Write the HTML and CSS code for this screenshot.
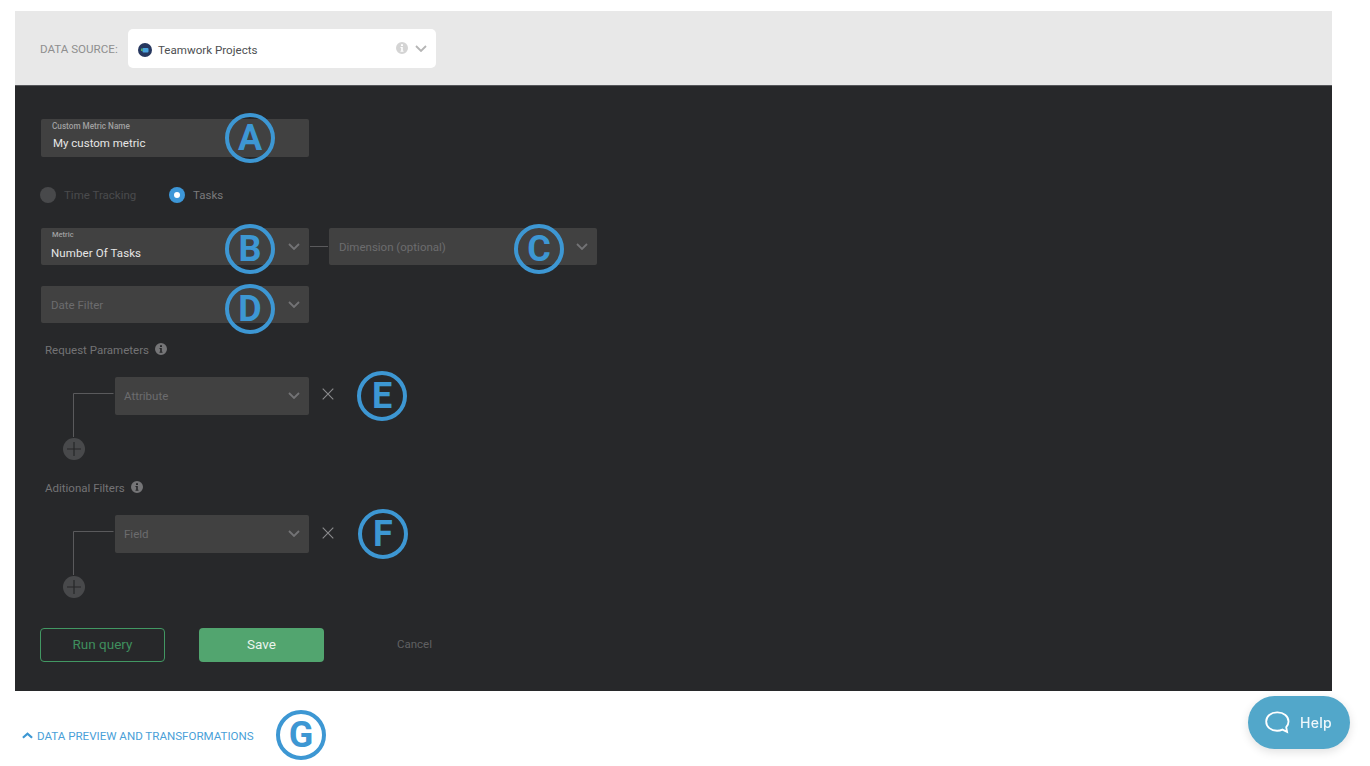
FILE: index.html
```html
<!DOCTYPE html>
<html lang="en">
<head>
<meta charset="utf-8">
<title>Custom Metric</title>
<link rel="stylesheet" href="styles.css">
</head>
<body>
<main class="page">
  <header class="source-bar">
    <span class="source-label">DATA SOURCE:</span>
    <div class="source-select">
      <svg class="source-logo" viewBox="0 0 14 14"><circle cx="7" cy="7" r="7" fill="#26375f"/><rect x="4.500" y="5" width="6" height="4.500" rx="1" fill="#4aa3df"/><rect x="3" y="5.500" width="1.800" height="2.500" fill="#4fae6f"/></svg>
      <span class="source-name">Teamwork Projects</span>
      <svg class="info info-light" viewBox="0 0 12 12"><use href="#i-info"/></svg>
      <svg class="chev chev-light" viewBox="0 0 12 7"><use href="#i-chev"/></svg>
    </div>
  </header>

  <section class="panel">
    <div class="field field-name">
      <label class="mini mini-name">Custom Metric Name</label>
      <span class="value value-name">My custom metric</span>
      <span class="badge badge-a">A</span>
    </div>

    <div class="radios">
      <span class="radio radio-off"></span><span class="radio-text radio-text-off">Time Tracking</span>
      <span class="radio radio-on"></span><span class="radio-text">Tasks</span>
    </div>

    <div class="metric-row">
      <div class="field field-select">
        <label class="mini mini-metric">Metric</label>
        <span class="value">Number Of Tasks</span>
        <span class="badge badge-b">B</span>
        <svg class="chev chev-dark" viewBox="0 0 12 7"><use href="#i-chev"/></svg>
      </div>
      <span class="connector"></span>
      <div class="field field-select field-plain">
        <span class="placeholder">Dimension (optional)</span>
        <span class="badge badge-c">C</span>
        <svg class="chev chev-dark" viewBox="0 0 12 7"><use href="#i-chev"/></svg>
      </div>
    </div>

    <div class="field field-select field-plain field-date">
      <span class="placeholder">Date Filter</span>
      <span class="badge badge-d">D</span>
      <svg class="chev chev-dark" viewBox="0 0 12 7"><use href="#i-chev"/></svg>
    </div>

    <div class="section-title title-params">Request Parameters <svg class="info info-dark" viewBox="0 0 12 12"><use href="#i-info"/></svg></div>
    <div class="tree">
      <svg class="tree-lines" viewBox="0 0 42 60"><path d="M40.500 16.500H.5V60" fill="none" stroke="#5a5a5c"/></svg>
      <div class="field field-attr field-plain">
        <span class="placeholder placeholder-attr">Attribute</span>
        <svg class="chev chev-dark" viewBox="0 0 12 7"><use href="#i-chev"/></svg>
      </div>
      <svg class="close" viewBox="0 0 12 12"><path d="M.7.7l10.600 10.600M11.300.7L.7 11.300" stroke="#8b8b8d" stroke-width="1.100" fill="none"/></svg>
      <span class="badge badge-e">E</span>
      <span class="add"><svg viewBox="0 0 14 14"><path d="M7 0v14M0 7h14" stroke="#262729" stroke-width="1.200"/></svg></span>
    </div>

    <div class="section-title title-filters">Aditional Filters <svg class="info info-dark" viewBox="0 0 12 12"><use href="#i-info"/></svg></div>
    <div class="tree">
      <svg class="tree-lines" viewBox="0 0 42 60"><path d="M40.500 16.500H.5V60" fill="none" stroke="#5a5a5c"/></svg>
      <div class="field field-attr field-plain">
        <span class="placeholder placeholder-attr">Field</span>
        <svg class="chev chev-dark" viewBox="0 0 12 7"><use href="#i-chev"/></svg>
      </div>
      <svg class="close close-low" viewBox="0 0 12 12"><path d="M.7.7l10.600 10.600M11.300.7L.7 11.300" stroke="#8b8b8d" stroke-width="1.100" fill="none"/></svg>
      <span class="badge badge-f">F</span>
      <span class="add"><svg viewBox="0 0 14 14"><path d="M7 0v14M0 7h14" stroke="#262729" stroke-width="1.200"/></svg></span>
    </div>

    <div class="actions">
      <button class="btn btn-outline">Run query</button>
      <button class="btn btn-solid">Save</button>
      <span class="cancel">Cancel</span>
    </div>
  </section>

  <footer class="preview">
    <svg class="preview-chev" viewBox="0 0 12 7"><path d="M1 6l5-4.500L11 6" fill="none" stroke="#3d97d3" stroke-width="2.400"/></svg>
    <span class="preview-text">DATA PREVIEW AND TRANSFORMATIONS</span>
    <span class="badge badge-g">G</span>
  </footer>
</main>

<button class="help">
  <svg class="help-icon" viewBox="0 0 26 24"><path d="M12.500 1.500C6 1.500 1.200 5.600 1.200 11s4.800 9.600 11.300 9.600c2 0 4-.4 5.600-1.200l4.900 2.300-.9-4.800c1.500-1.700 2.400-3.700 2.400-5.900 0-5.400-5-9.500-11.500-9.500z" fill="none" stroke="#fff" stroke-width="1.900"/></svg>
  <span>Help</span>
</button>

<svg class="defs" width="0" height="0">
  <defs>
    <symbol id="i-info" viewBox="0 0 12 12"><path fill-rule="evenodd" fill="currentColor" d="M6 0a6 6 0 1 1 0 12A6 6 0 0 1 6 0zM5 2.300v1.700h2V2.300zM4.500 5v1h.7v2.800h-.7v1h3v-1h-.7V5z"/></symbol>
    <symbol id="i-chev" viewBox="0 0 12 7"><path d="M1 1l5 5 5-5" fill="none" stroke="currentColor" stroke-width="1.800"/></symbol>
  </defs>
</svg>
</body>
</html>
```

FILE: styles.css
```css
* { box-sizing: border-box; }
html, body { margin: 0; padding: 0; height: 100%; overflow: hidden; }
body {
  background: #fff;
  font-family: Roboto, "Liberation Sans", sans-serif;
  font-size: 12px;
  color: #333;
}
svg { display: block; }
.defs { position: absolute; }
.page { width: 1332px; padding: 11px 0 0 15px; }

.source-bar {
  height: 74px;
  background: #e8e8e8;
  padding: 18px 0 0 25px;
  display: flex;
  align-items: flex-start;
}
.source-label { font-size: 11.600px; color: #8f8f8f; margin: 13px 10px 0 0; line-height: 14px; width: 78px; white-space: nowrap; }
.source-select {
  width: 308px;
  height: 39px;
  background: #fff;
  border-radius: 5px;
  display: flex;
  align-items: center;
  padding: 0 9px 0 10px;
}
.source-logo { width: 14px; height: 14px; margin: 2px 6px 0 0; }
.source-name { font-size: 11.600px; color: #4d4f52; flex: 1; margin-top: 2px; }
.info { width: 12px; height: 12px; }
.info-light { color: #d4d4d4; margin-right: 7px; margin-top: -2px; }
.chev { width: 12px; height: 7px; }
.chev-light { color: #b5b5b5; }
.chev-dark { color: #737375; position: absolute; right: 9px; top: 15px; }

.panel {
  height: 606px;
  background: #27282a;
  border-top: 1px solid #55565a;
  padding: 33px 0 0 26px;
}
.field { position: relative; background: #414141; border-radius: 2px; height: 37px; }
.field-name { width: 268px; height: 38px; }
.field-select { width: 268px; }
.mini { position: absolute; left: 11px; top: 3px; font-size: 8.200px; line-height: 9px; color: #a0a0a0; font-weight: 500; }
.mini-metric { top: 2px; font-size: 7.500px; }
.value { position: absolute; left: 10px; top: 18px; font-size: 11.500px; line-height: 14px; color: #e6e6e6; letter-spacing: .1px; }
.value-name { left: 12px; top: 17px; letter-spacing: 0; }
.placeholder { position: absolute; left: 10px; top: 12px; font-size: 11.500px; line-height: 14px; color: #6c6c6e; }
.placeholder-attr { left: 9px; }

.radios { display: flex; align-items: center; height: 16px; margin: 30px 0 0 -1px; }
.radio { width: 16px; height: 16px; border-radius: 50%; flex: none; }
.radio-off { background: #48494b; }
.radio-on {
  background: #3d97d8;
  display: flex; align-items: center; justify-content: center;
}
.radio-on::after { content: ""; width: 6px; height: 6px; border-radius: 50%; background: #fff; }
.radio-text { font-size: 11.500px; color: #7a7a7c; margin-left: 8px; }
.radio-text-off { color: #4a4b4d; width: 105px; }

.metric-row { display: flex; align-items: center; margin-top: 25px; }
.connector { width: 18px; height: 1px; background: #5a5a5c; margin: 0 1px; }
.field-date { margin-top: 21px; }

.section-title { font-size: 11.500px; color: #737375; margin-left: 4px; display: flex; align-items: center; line-height: 14px; }
.section-title .info { margin-left: 6px; margin-top: -2px; }
.info-dark { color: #757577; }
.title-params { margin-top: 20px; }
.title-filters { margin-top: 28px; }

.tree { position: relative; height: 76px; margin-top: 20px; padding-left: 74px; }
.tree-lines { position: absolute; left: 32px; top: 0; width: 42px; height: 60px; }
.field-attr { width: 194px; height: 38px; }
.close { position: absolute; left: 281px; top: 11px; width: 12px; height: 12px; }
.close-low { top: 12px; }
.add {
  position: absolute; left: 22px; top: 61px;
  width: 22px; height: 22px; border-radius: 50%;
  background: #48494b;
  display: flex; align-items: center; justify-content: center;
}
.add svg { width: 14px; height: 14px; }

.actions { display: flex; align-items: center; margin: 37px 0 0 -1px; }
.btn {
  width: 125px; height: 34px; border-radius: 4px;
  font-family: inherit; font-size: 13.500px;
  padding: 0 0 2px;
}
.btn-outline { background: transparent; border: 1px solid #429863; color: #3f8f5e; }
.btn-solid { background: #52a56f; border: 0; color: #e9f4ed; margin-left: 34px; }
.cancel { font-size: 11.500px; color: #606062; margin-left: 73px; margin-top: -2px; }

.preview { position: relative; display: flex; align-items: center; height: 44px; margin-left: 7px; margin-top: 22px; }
.preview-chev { width: 11px; height: 7px; }
.preview-text { font-size: 11.570px; color: #4a9fd8; margin: 1px 0 0 4px; line-height: 14px; white-space: nowrap; }

.badge {
  position: absolute;
  width: 50px; height: 50px;
  border: 4px solid #3d97d3;
  border-radius: 50%;
  color: #3d97d3;
  font-family: Roboto, sans-serif;
  font-weight: 700;
  font-size: 36px;
  line-height: 42px;
  text-align: center;
}
.badge-a { left: 184px; top: -6px; }
.badge-b { left: 184px; top: -4px; }
.badge-c { left: 185px; top: -4px; }
.badge-d { left: 184px; top: -2px; }
.badge-e { left: 316px; top: -6px; }
.badge-f { left: 317px; top: -6px; }
.badge-g { left: 254px; top: -3px; }

.help {
  position: fixed; left: 1248px; top: 696px;
  width: 102px; height: 53px;
  border: 0; border-radius: 27px;
  background: #52a7ca;
  color: #eef7fb;
  font-family: Inter, Roboto, sans-serif;
  font-size: 14px; font-weight: 500;
  letter-spacing: .3px;
  display: flex; align-items: center;
  padding: 0 0 0 17px;
  box-shadow: 0 3px 10px rgba(0,0,0,.12);
}
.help-icon { width: 25px; height: 23px; margin-right: 10px; }
```
